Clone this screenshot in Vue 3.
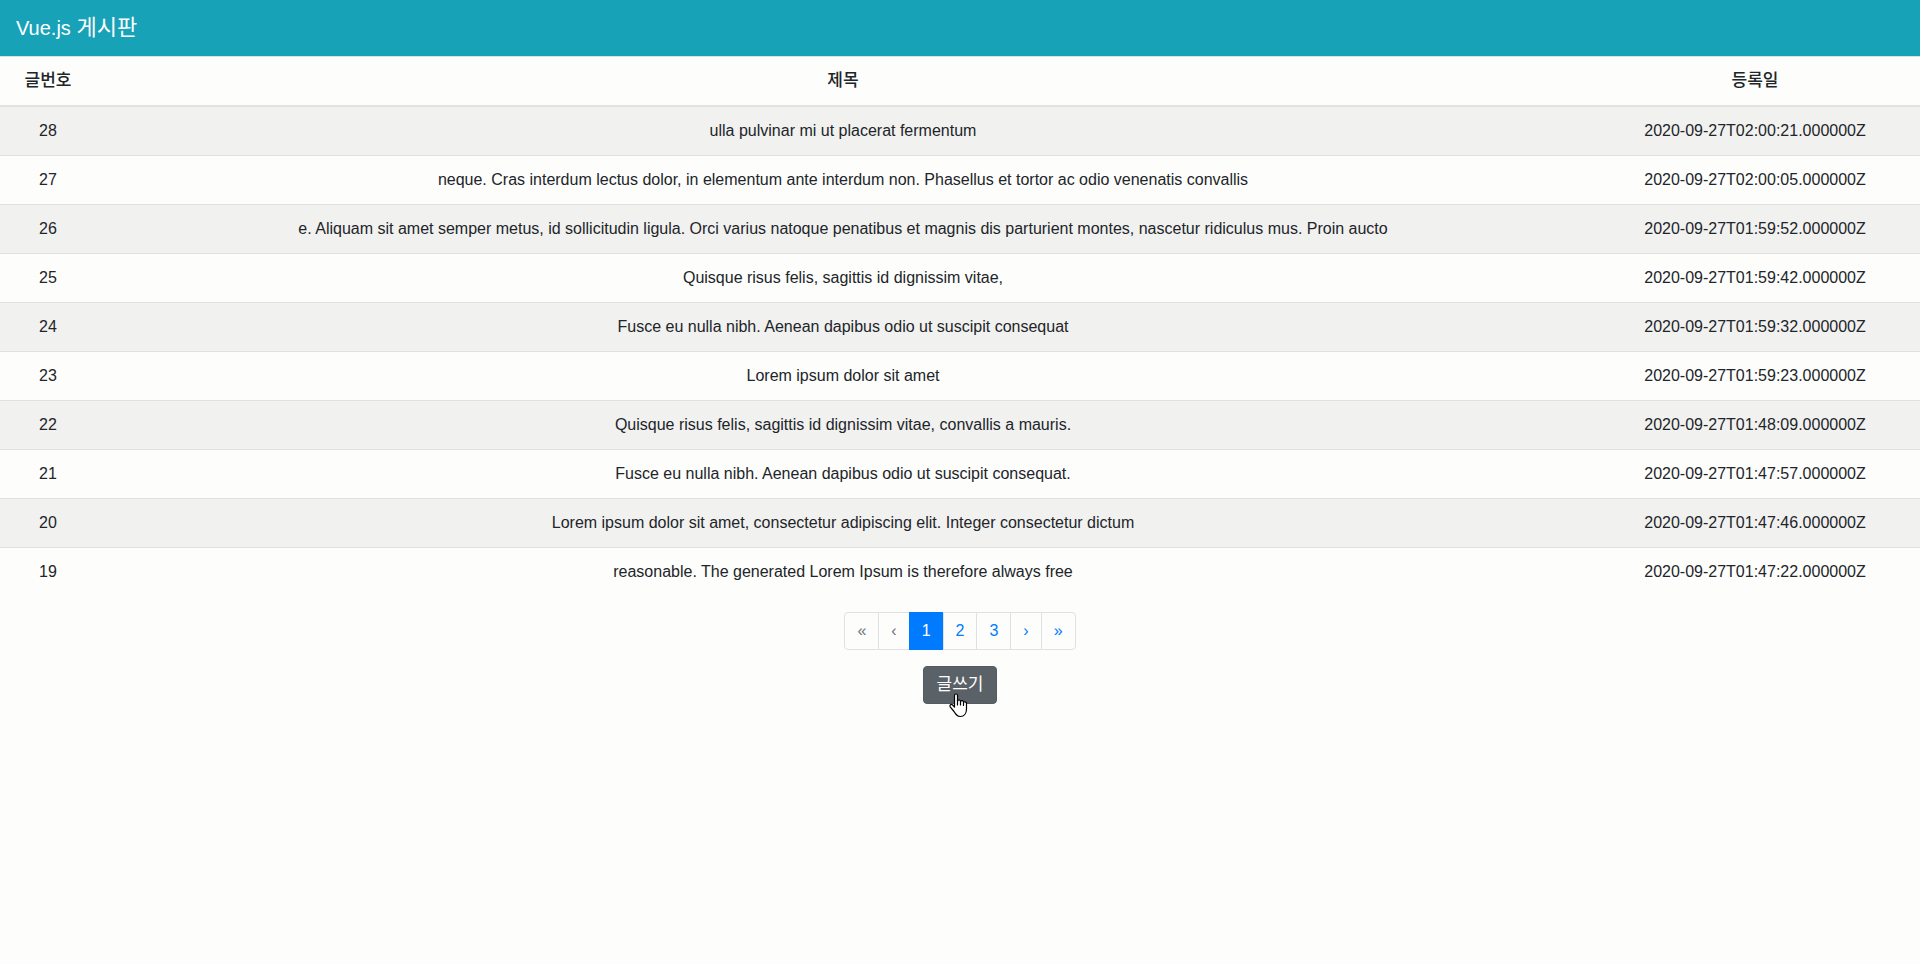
<script setup>
import { ref } from 'vue'

const posts = [
  { id: 28, title: 'ulla pulvinar mi ut placerat fermentum', date: '2020-09-27T02:00:21.000000Z' },
  { id: 27, title: 'neque. Cras interdum lectus dolor, in elementum ante interdum non. Phasellus et tortor ac odio venenatis convallis', date: '2020-09-27T02:00:05.000000Z' },
  { id: 26, title: 'e. Aliquam sit amet semper metus, id sollicitudin ligula. Orci varius natoque penatibus et magnis dis parturient montes, nascetur ridiculus mus. Proin aucto', date: '2020-09-27T01:59:52.000000Z' },
  { id: 25, title: 'Quisque risus felis, sagittis id dignissim vitae,', date: '2020-09-27T01:59:42.000000Z' },
  { id: 24, title: 'Fusce eu nulla nibh. Aenean dapibus odio ut suscipit consequat', date: '2020-09-27T01:59:32.000000Z' },
  { id: 23, title: 'Lorem ipsum dolor sit amet', date: '2020-09-27T01:59:23.000000Z' },
  { id: 22, title: 'Quisque risus felis, sagittis id dignissim vitae, convallis a mauris.', date: '2020-09-27T01:48:09.000000Z' },
  { id: 21, title: 'Fusce eu nulla nibh. Aenean dapibus odio ut suscipit consequat.', date: '2020-09-27T01:47:57.000000Z' },
  { id: 20, title: 'Lorem ipsum dolor sit amet, consectetur adipiscing elit. Integer consectetur dictum', date: '2020-09-27T01:47:46.000000Z' },
  { id: 19, title: 'reasonable. The generated Lorem Ipsum is therefore always free', date: '2020-09-27T01:47:22.000000Z' },
]

const page = ref(1)
const last = 3
</script>

<template>
  <div class="board">
    <nav class="navbar">
      <a class="brand" href="#">Vue.js <span class="brand-ko">게시판</span></a>
    </nav>

    <table class="posts">
      <thead>
        <tr>
          <th class="col-id" scope="col">글번호</th>
          <th scope="col">제목</th>
          <th class="col-date" scope="col">등록일</th>
        </tr>
      </thead>
      <tbody>
        <tr v-for="post in posts" :key="post.id">
          <td>{{ post.id }}</td>
          <td>{{ post.title }}</td>
          <td>{{ post.date }}</td>
        </tr>
      </tbody>
    </table>

    <div class="pagination">
      <button type="button" aria-label="First page" :disabled="page === 1" @click="page = 1">«</button>
      <button type="button" aria-label="Previous page" :disabled="page === 1" @click="page--">‹</button>
      <button
        v-for="n in last"
        :key="n"
        type="button"
        :class="{ active: n === page }"
        @click="page = n"
      >{{ n }}</button>
      <button type="button" aria-label="Next page" :disabled="page === last" @click="page++">›</button>
      <button type="button" aria-label="Last page" :disabled="page === last" @click="page = last">»</button>
    </div>

    <div class="actions">
      <div class="write-wrap">
        <button type="button" class="write">글쓰기</button>
        <svg class="pointer" width="19" height="25" viewBox="0 0 19 25" aria-hidden="true">
          <path
            d="M5.5 2.5C5.5 0.5 8.5 0.5 8.5 2.5V8C9 6.5 11.5 6.7 11.5 8.5C12 7.2 14.5 7.4 14.5 9.3C15.2 8.3 17.5 8.7 17.5 10.5V16C17.5 20.5 15 23.5 11.5 23.5C8 23.5 6.8 21.5 5 18.5L1.2 13.8C0.3 12 2.2 10.8 3.6 12L5.5 14Z"
            fill="#fff" stroke="#000" stroke-width="1.2" stroke-linejoin="round"
          />
          <path d="M8.5 7.5V12M11.5 8.5V12M14.5 9.3V12.5" fill="none" stroke="#000" stroke-width="1.2" stroke-linecap="round" />
        </svg>
      </div>
    </div>
  </div>
</template>

<style>
body {
  margin: 0;
  background: #fdfdfc;
}
</style>

<style scoped>
.board {
  padding-bottom: 24px;
  color: #212529;
  font-family: "Liberation Sans", "Noto Sans CJK KR", sans-serif;
  font-size: 16px;
  line-height: 24px;
}

.navbar {
  display: flex;
  align-items: center;
  padding: 8px 16px;
  background: #17a2b8;
}

.brand {
  padding: 5px 0;
  color: #fff;
  font-size: 20px;
  line-height: 30px;
  text-decoration: none;
}

.brand-ko {
  font-size: 22px;
}

.posts {
  width: 100%;
  table-layout: fixed;
  border-collapse: collapse;
  text-align: center;
}

.posts th,
.posts td {
  box-sizing: border-box;
  padding: 12px;
  border-top: 1px solid #dee2e6;
}

.posts thead th {
  border-bottom: 2px solid #dee2e6;
  font-size: 17px;
  font-weight: 500;
}

.posts tbody tr:nth-child(odd) {
  background: #f1f1f0;
}

.col-id {
  width: 96px;
}

.col-date {
  width: 330px;
}

.pagination {
  display: flex;
  justify-content: center;
  margin: 16px 0;
}

.pagination button {
  margin: 0 0 0 -1px;
  padding: 8px 12px;
  border: 1px solid #dee2e6;
  background: #fdfdfc;
  color: #007bff;
  font: inherit;
  line-height: 20px;
  cursor: pointer;
}

.pagination button:first-child {
  margin-left: 0;
  border-radius: 4px 0 0 4px;
}

.pagination button:last-child {
  border-radius: 0 4px 4px 0;
}

.pagination button:disabled {
  color: #6c757d;
  cursor: default;
}

.pagination button.active {
  border-color: #007bff;
  background: #007bff;
  color: #fff;
}

.actions {
  display: flex;
  justify-content: center;
}

.write-wrap {
  position: relative;
}

.write {
  display: block;
  padding: 6px 13px;
  border: 1px solid #545b62;
  border-radius: 4px;
  background: #5a6268;
  color: #fff;
  font: inherit;
  font-size: 17px;
  line-height: 24px;
  cursor: pointer;
}

.pointer {
  position: absolute;
  top: 27px;
  left: 26px;
}
</style>
